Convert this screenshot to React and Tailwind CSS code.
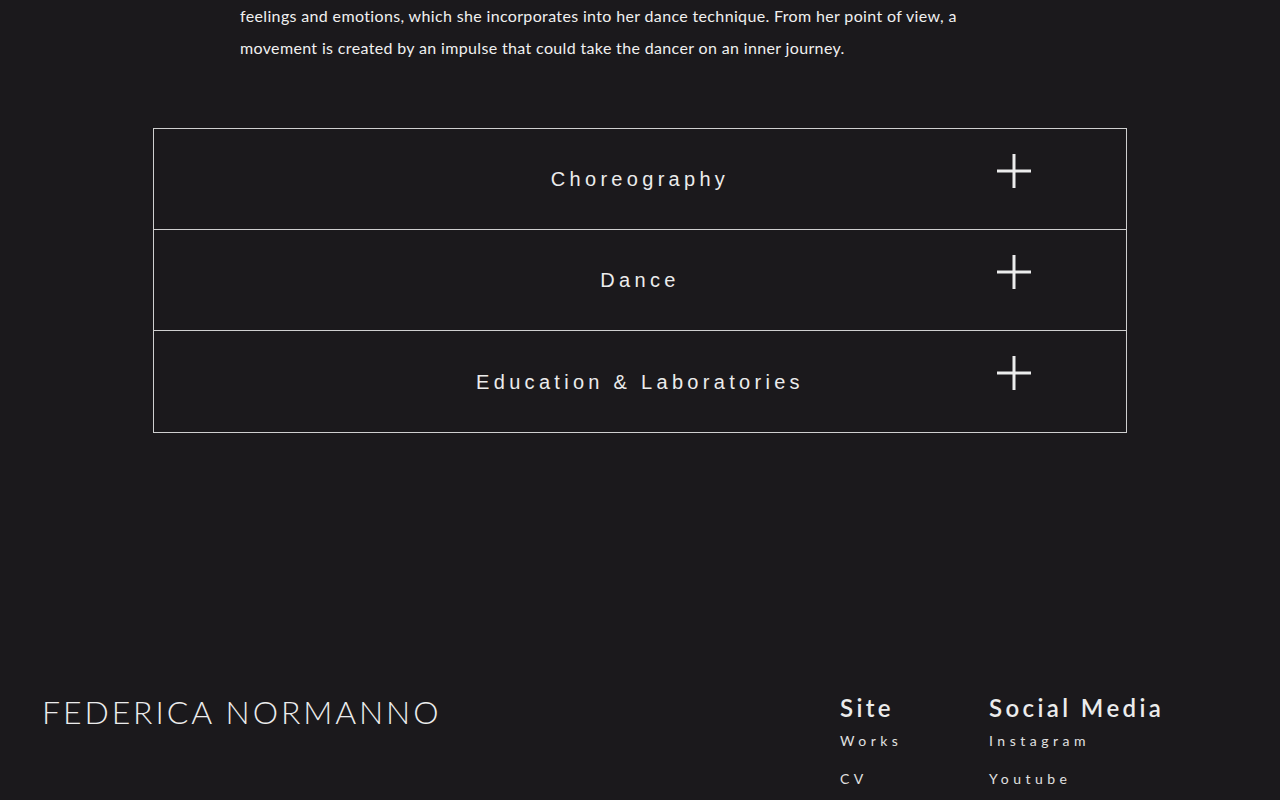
import React from 'react';

const SECTIONS = ['Choreography', 'Dance', 'Education & Laboratories'];

function PlusIcon() {
  return (
    <svg width="36" height="36" viewBox="0 0 36 36" className="text-[#ececec]">
      <line x1="1" y1="18" x2="35" y2="18" stroke="currentColor" strokeWidth="3" />
      <line x1="18" y1="1" x2="18" y2="35" stroke="currentColor" strokeWidth="3" />
    </svg>
  );
}

function AccordionRow({ title, last }) {
  return (
    <div className={`relative h-[101px] flex items-center justify-center ${last ? '' : 'border-b border-[#cfcfcf]'}`}>
      <span className="text-[20px] tracking-[4.3px] text-[#ececec] font-['Liberation_Sans',sans-serif]">
        {title}
      </span>
      <div className="absolute right-[94px] top-[24px]">
        <PlusIcon />
      </div>
    </div>
  );
}

export default function App() {
  return (
    <div className="min-h-[800px] bg-[#1b191c] text-[#ececec] font-['Lato',sans-serif] overflow-hidden">
      {/* bio tail */}
      <div className="pl-[240px] text-[16px] leading-[32px] tracking-[0.35px] text-[#f0f0f0]">
        <div>feelings and emotions, which she incorporates into her dance technique. From her point of view, a</div>
        <div>movement is created by an impulse that could take the dancer on an inner journey.</div>
      </div>

      {/* accordion */}
      <div className="mx-auto mt-[64px] w-[974px] border border-[#cfcfcf]">
        {SECTIONS.map((s, i) => (
          <AccordionRow key={s} title={s} last={i === SECTIONS.length - 1} />
        ))}
      </div>

      {/* footer */}
      <footer className="mt-[263px] flex items-start pl-[42px]">
        <div className="w-[798px] text-[32px] font-light tracking-[2.9px] leading-none text-[#ececec]">
          FEDERICA NORMANNO
        </div>
        <div className="flex">
          <div className="w-[149px]">
            <div className="text-[24px] font-semibold tracking-[3.4px] leading-none">Site</div>
            <div className="mt-[14px] text-[14px] tracking-[4.5px] leading-none text-[#e0e0e0]">Works</div>
            <div className="mt-[24px] text-[14px] tracking-[4.5px] leading-none text-[#e0e0e0]">CV</div>
          </div>
          <div>
            <div className="text-[24px] font-semibold tracking-[3.4px] leading-none">Social Media</div>
            <div className="mt-[14px] text-[14px] tracking-[4.5px] leading-none text-[#e0e0e0]">Instagram</div>
            <div className="mt-[24px] text-[14px] tracking-[4.5px] leading-none text-[#e0e0e0]">Youtube</div>
          </div>
        </div>
      </footer>
    </div>
  );
}
